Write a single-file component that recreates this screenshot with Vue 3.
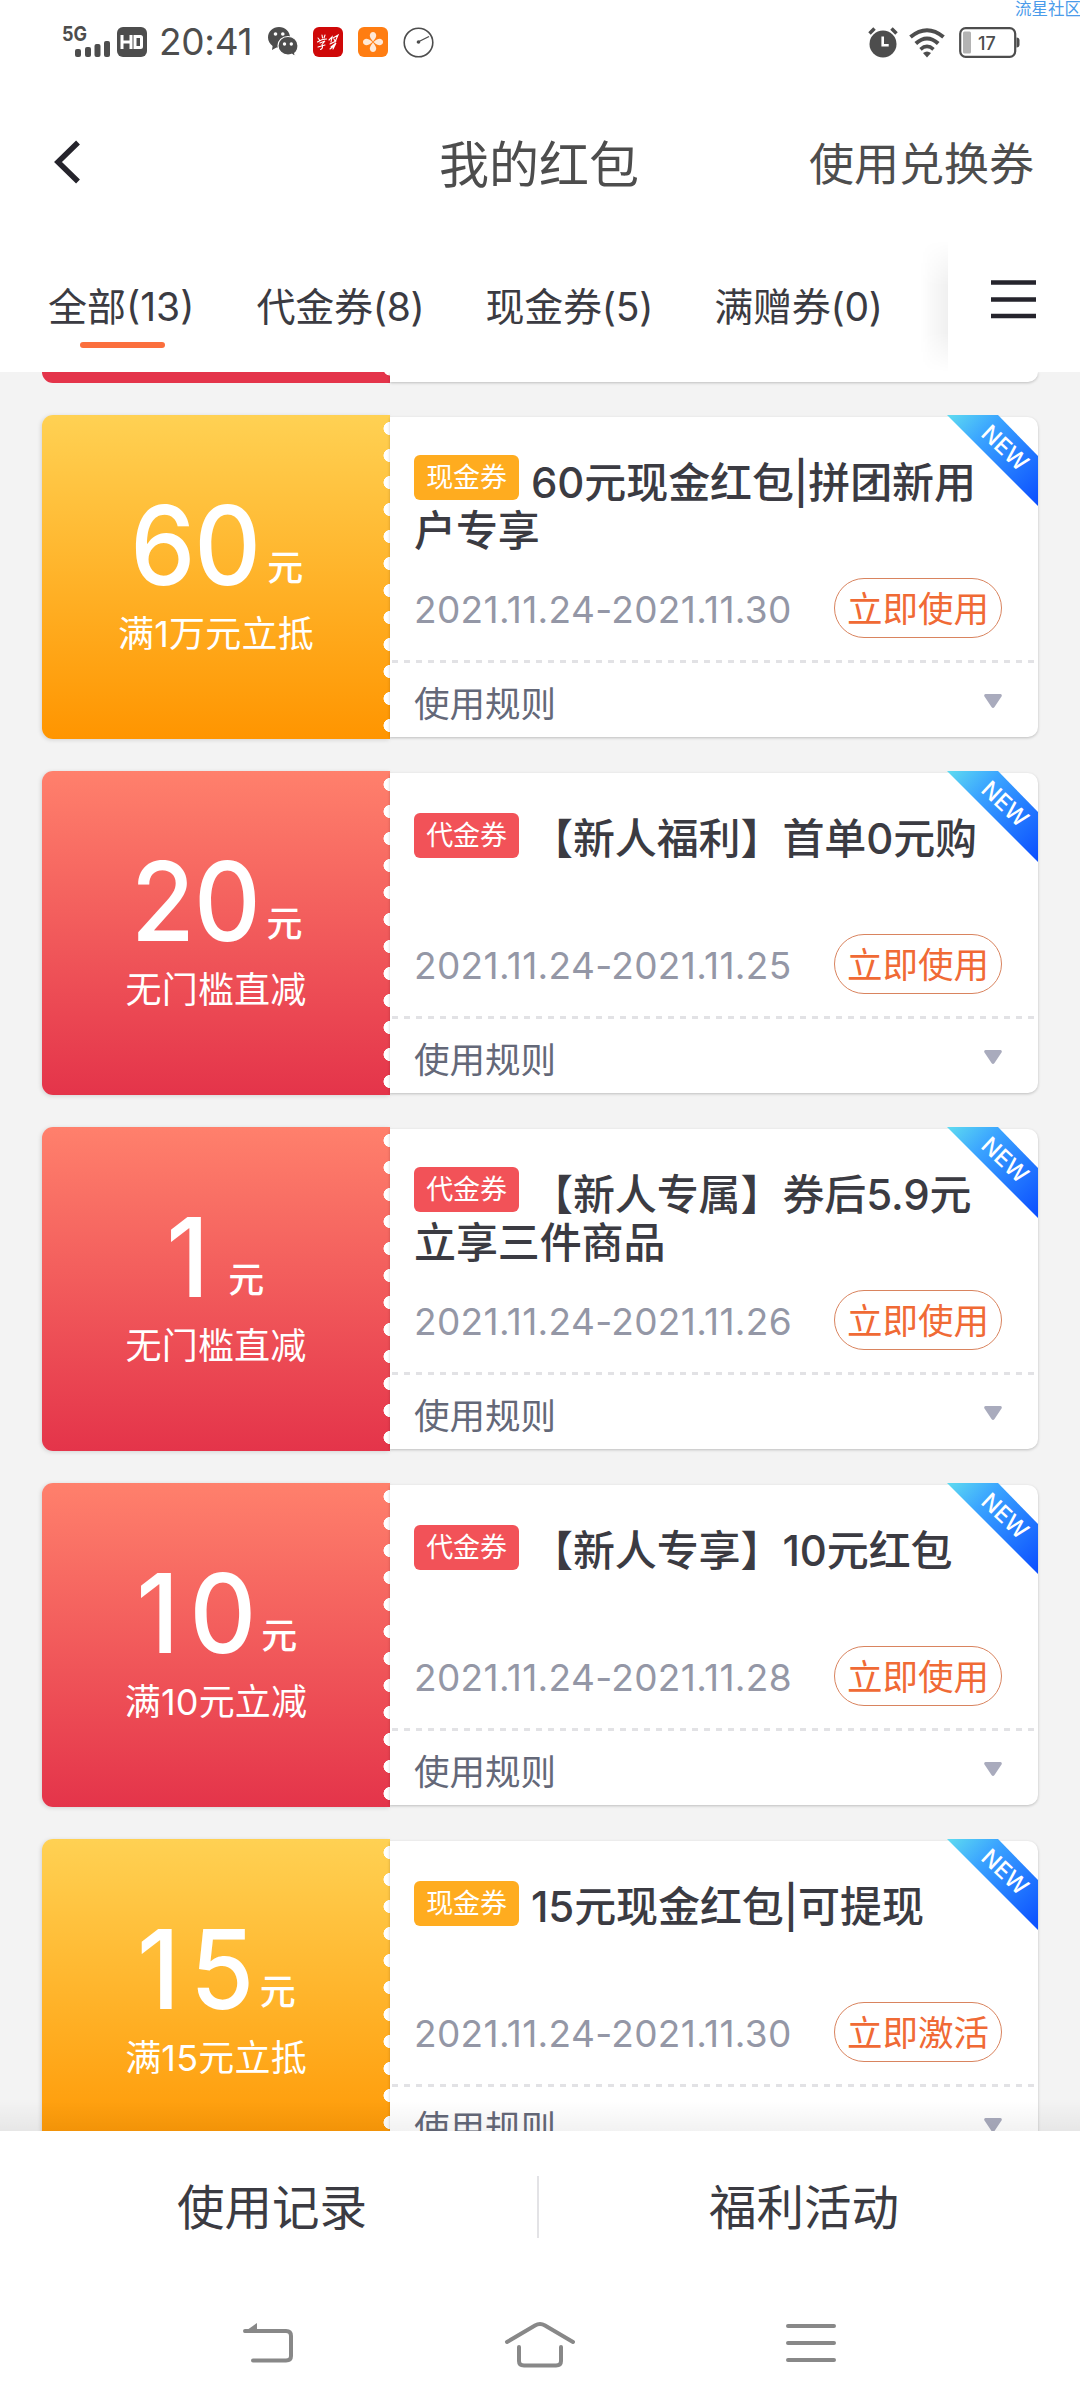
<script setup>
const tabs = ['全部(13)', '代金券(8)', '现金券(5)', '满赠券(0)']

const coupons = [
  { kind: 'cash', tag: '现金券', amount: '60', rule: '满1万元立抵', title: '60元现金红包|拼团新用户专享', date: '2021.11.24-2021.11.30', action: '立即使用', tall: true },
  { kind: 'voucher', tag: '代金券', amount: '20', rule: '无门槛直减', title: '【新人福利】首单0元购', date: '2021.11.24-2021.11.25', action: '立即使用' },
  { kind: 'voucher', tag: '代金券', amount: '1', rule: '无门槛直减', title: '【新人专属】券后5.9元立享三件商品', date: '2021.11.24-2021.11.26', action: '立即使用', tall: true },
  { kind: 'voucher', tag: '代金券', amount: '10', rule: '满10元立减', title: '【新人专享】10元红包', date: '2021.11.24-2021.11.28', action: '立即使用' },
  { kind: 'cash', tag: '现金券', amount: '15', rule: '满15元立抵', title: '15元现金红包|可提现', date: '2021.11.24-2021.11.30', action: '立即激活' }
]
</script>

<template>
  <div class="screen">
    <div class="status">
      <svg class="signal" width="52" height="36" viewBox="0 0 52 36">
        <text x="0" y="17" class="net" textLength="25" lengthAdjust="spacingAndGlyphs">5G</text>
        <rect x="13" y="25" width="6" height="8" rx="2" />
        <rect x="23" y="23" width="6" height="10" rx="2" />
        <rect x="32.500" y="20" width="6" height="13" rx="2" />
        <rect x="42" y="17" width="6" height="16" rx="2" />
      </svg>
      <svg class="hd" width="30" height="30" viewBox="0 0 30 30">
        <rect width="30" height="30" rx="6" fill="#4d4d4d" />
        <path d="M5 8v14M14 8v14M5 15h9M18 9.500h5.500q1 0 1 1v9q0 1-1 1H18z" fill="none" stroke="#fff" stroke-width="3" />
      </svg>
      <span class="clock">20:41</span>
      <svg class="wechat" width="30" height="30" viewBox="0 0 30 30">
        <path d="M11 0C4.900 0 0 4.600 0 10.500c0 3.500 1.900 6.500 4.600 8.400L4 23l4.500-2.600c6 1 13.500-3.500 13.500-9.900C22 4.600 17 0 11 0z" fill="#4d4d4d" />
        <path d="M20 9.500c-5.700 0-10 4-10 9.200s4.300 9.300 10 9.300c1.400 0 2.500-.2 3.800-.7L27.500 30l-.8-3.700c2-1.700 3.300-4.400 3.300-7.600 0-5.200-4.300-9.200-10-9.200z" fill="#4d4d4d" stroke="#fff" stroke-width="1.200" />
        <g fill="#fff"><circle cx="7.500" cy="7" r="1.800" /><circle cx="14.800" cy="7" r="1.800" /><circle cx="16.500" cy="17" r="1.700" /><circle cx="23.300" cy="17" r="1.700" /></g>
      </svg>
      <svg class="app" width="30" height="30" viewBox="0 0 30 30">
        <rect width="30" height="30" rx="6" fill="#cf0808" />
        <g fill="none" stroke="#fff" stroke-width="1.100" stroke-linecap="round">
          <path d="M5 11l1.500 2M9 8l.5 3M4.500 15q4-3 9-3M7 16l5-2-3 3.500q1.500 4-1.500 5M5 20l7-2M12 8l-1 3" />
          <path d="M16 13l3-3-1 5M20 11l5-3-3 7M17 17l6-3M18 20l5-4-3 6M17 22l4-3M21 12l1 2" />
        </g>
      </svg>
      <svg class="app" width="30" height="30" viewBox="0 0 30 30">
        <rect width="30" height="30" rx="6" fill="#ff7d12" />
        <g fill="#ffe9d8">
          <path d="M15 14.500q-3.500-4-3.200-6.500Q12.500 5 15 5t3.200 3q.3 2.500-3.200 6.500z" />
          <path d="M15 15.500q-3.500 4-3.200 6.500.7 3 3.200 3t3.200-3q.3-2.500-3.200-6.500z" />
          <path d="M14.500 15q-4-3.500-6.500-3.200-3 .7-3 3.200t3 3.200q2.500.3 6.500-3.200z" />
          <path d="M15.500 15q4-3.500 6.500-3.200 3 .7 3 3.200t-3 3.200q-2.500.3-6.500-3.200z" />
        </g>
      </svg>
      <svg class="app" width="31" height="31" viewBox="0 0 31 31">
        <circle cx="15.500" cy="15.500" r="14.300" fill="none" stroke="#4d4d4d" stroke-width="1.600" />
        <path d="M14 15.500L26 9.500" stroke="#4d4d4d" stroke-width="1.300" /><circle cx="15.500" cy="15" r="1.800" fill="#4d4d4d" />
      </svg>
      <div class="status-right">
        <svg width="30" height="31" viewBox="0 0 30 31">
          <circle cx="15" cy="17" r="13.500" fill="#4d4d4d" />
          <path d="M1.500 6.500l5-5M28.500 6.500l-5-5" stroke="#4d4d4d" stroke-width="3.500" />
          <path d="M14.700 9.500v8.800h6" fill="none" stroke="#fff" stroke-width="2.600" />
        </svg>
        <svg class="wifi" width="36" height="30" viewBox="0 0 36 30">
          <g fill="none" stroke="#4d4d4d" stroke-width="4">
            <path d="M1.500 9Q18-4.500 34.500 9" /><path d="M6.800 15.500Q18 5.500 29.200 15.500" /><path d="M11.500 21.300Q18 15.500 24.500 21.300" stroke-width="3.600" />
          </g>
          <path d="M14 25q4-3 8 0l-4 4.500z" fill="#4d4d4d" />
        </svg>
        <svg width="61" height="31" viewBox="0 0 61 31">
          <rect x="1.200" y="1.200" width="55" height="28.600" rx="5.500" fill="#fff" stroke="#4d4d4d" stroke-width="2.200" />
          <rect x="4" y="4.500" width="8" height="22" rx="1.500" fill="#b3b3b3" />
          <path d="M57.500 10.500q3 0 3 3v4q0 3-3 3z" fill="#4d4d4d" />
          <text x="19" y="22.500" class="pct">17</text>
        </svg>
      </div>
      <span class="mark">流星社区</span>
    </div>

    <header class="head">
      <svg width="26" height="44" viewBox="0 0 26 44"><path d="M24 2.500L4 22l20 19.500" fill="none" stroke="#25242c" stroke-width="5.500" /></svg>
      <h1>我的红包</h1>
      <a class="redeem">使用兑换券</a>
    </header>

    <nav class="tabs">
      <div class="tab-list">
        <span v-for="(t, i) in tabs" :key="t" class="tab" :class="{ active: i === 0 }">{{ t }}</span>
      </div>
      <div class="more">
        <svg width="45" height="39" viewBox="0 0 45 39"><path d="M0 2.500h45M0 19.500h45M0 36h45" stroke="#25242c" stroke-width="4.600" /></svg>
      </div>
    </nav>

    <main class="list">
      <div class="stub"><div class="stub-left"></div><div class="stub-right"></div></div>
      <article v-for="c in coupons" :key="c.title" class="coupon" :class="c.kind">
        <div class="value">
          <div class="amount" :class="{ teen: c.amount.length > 1 && c.amount[0] === '1', single: c.amount.length === 1 }"><b>{{ c.amount }}</b><small>元</small></div>
          <div class="cond">{{ c.rule }}</div>
        </div>
        <div class="info">
          <h2 :class="{ tall: c.tall }"><span class="tag">{{ c.tag }}</span>{{ c.title }}</h2>
          <div class="row">
            <time>{{ c.date }}</time>
            <button>{{ c.action }}</button>
          </div>
          <div class="rules">
            <span>使用规则</span>
            <svg width="18" height="14" viewBox="0 0 18 14"><path d="M1.500 0h15q2 .5 1 2.500L10.500 13q-1.500 1.800-3 0L.5 2.500Q-.5.500 1.500 0z" fill="#a9abbd" /></svg>
          </div>
        </div>
        <div class="ribbon"><span>NEW</span></div>
      </article>
    </main>

    <footer class="actions"><a>使用记录</a><i></i><a>福利活动</a></footer>
    <div class="sysnav">
      <svg width="54" height="44" viewBox="0 0 54 44"><path d="M4 10h41q5 0 5 5v20q0 4.500-5 4.500H12" /><path d="M2.500 11.500L16 2v9z" fill="#888" stroke="none" /></svg>
      <svg width="72" height="48" viewBox="0 0 72 48"><path d="M3 21L31 4.500q5-3 10 0L69 21M15 26v14q0 4.500 5 4.500h32q5 0 5-4.500V26" /></svg>
      <svg width="52" height="44" viewBox="0 0 52 44"><path d="M3 5h46M3 22h46M3 39h46" /></svg>
    </div>
  </div>
</template>

<style>
body { background: #fff; }
</style>

<style scoped>
.screen { width: 1080px; height: 2408px; display: flex; flex-direction: column; background: #fff; overflow: hidden; font-family: Inter, "Noto Sans CJK SC", sans-serif; color: #3b3b42; }
.status { position: relative; height: 84px; display: flex; align-items: center; padding-left: 62px; box-sizing: border-box; flex: none; }
.signal { margin-right: 3px; margin-top: -1px; fill: #4d4d4d; overflow: visible; }
.net { font: 700 20px Inter, sans-serif; }
.clock { font: 400 37px/40px Inter, sans-serif; color: #4d4d4d; margin-left: 12px; width: 109px; letter-spacing: -0.3px; }
.app { margin-left: 15px; }
.status-right { position: absolute; left: 868px; top: 27px; display: flex; }
.wifi { margin: 1px 14px 0 11px; }
.pct { font: 500 18px Inter, sans-serif; fill: #4d4d4d; }
.mark { position: absolute; right: -1px; top: -1px; font-size: 16.500px; line-height: 20px; color: #4a9bea; white-space: nowrap; }
.head { height: 156px; flex: none; display: flex; align-items: center; justify-content: space-between; padding: 0 46px 0 54px; position: relative; box-sizing: border-box; }
.head h1 { position: absolute; left: 0; right: 0; margin: 5px 2px 0 0; text-align: center; font-size: 50px; line-height: 60px; font-weight: 400; color: #4d4d4d; }
.redeem { font-size: 45px; line-height: 60px; color: #4d4d4d; margin-top: 5px; }
.tabs { height: 132px; flex: none; display: flex; }
.tab-list { position: relative; width: 948px; box-sizing: border-box; padding-left: 48px; display: flex; }
.tab-list::after { content: ""; position: absolute; right: 0; top: 0; bottom: 0; width: 28px; background: linear-gradient(to left, rgba(0,0,0,.06), rgba(0,0,0,0)); mask-image: linear-gradient(transparent, #000 35%, #000 70%, transparent); }
.tab { position: relative; font-size: 39px; line-height: 60px; margin-top: 37px; height: 71px; white-space: nowrap; margin-right: 61px; letter-spacing: -0.25px; }
.tab.active { margin-right: 62px; letter-spacing: 0; }
.tab.active::after { content: ""; position: absolute; left: 32px; bottom: 0; width: 85px; height: 6px; border-radius: 3px; background: #fb6f3d; }
.more { width: 132px; padding: 40px 0 0 43px; box-sizing: border-box; }
.list { height: 1759px; flex: none; overflow: hidden; background: #f3f3f3; padding: 0 42px; position: relative; box-sizing: border-box; }
.list::after { content: ""; position: absolute; left: 0; right: 0; bottom: 0; height: 30px; background: linear-gradient(to top, rgba(0,0,0,.05), rgba(0,0,0,0)); }
.stub { display: flex; height: 11px; margin-bottom: 32px; }
.stub-left { width: 348px; border-radius: 0 0 0 11px; background: radial-gradient(circle at 348px -3px, #fff 6.200px, transparent 6.800px), #e4344a; }
.stub-right { flex: 1; height: 9.500px; background: #fff; border-radius: 0 0 10px 0; box-shadow: 0 1px 3px rgba(0,0,0,.22); }
.coupon { position: relative; height: 324px; display: flex; margin-bottom: 32px; }
.value { width: 348px; box-sizing: border-box; padding-top: 85px; border-radius: 11px 0 0 11px; color: #fff; text-align: center; box-shadow: -1px 1px 4px rgba(0,0,0,.13); }
.cash .value { background: radial-gradient(circle at 7px 13.500px, #fff 6.200px, transparent 6.800px) right top / 7px 27px repeat-y, linear-gradient(#ffd153, #ff9500); }
.voucher .value { background: radial-gradient(circle at 7px 13.500px, #fff 6.200px, transparent 6.800px) right top / 7px 27px repeat-y, linear-gradient(#ff806c, #e4344a); }
.amount { height: 90px; padding-right: 3px; display: flex; justify-content: center; align-items: baseline; line-height: 90px; }
.amount b { font-size: 110px; font-weight: 500; letter-spacing: -1px; transform: scaleX(.94); }
.amount small { position: relative; top: -4px; font-size: 36px; font-weight: 500; margin-left: 3px; }
.amount.teen b { letter-spacing: 11px; }
.amount.teen small { margin-left: -9px; }
.amount.single b { letter-spacing: 0; }
.amount.single small { margin-left: 18px; }
.cond { font-size: 36px; line-height: 50px; margin-top: 19px; letter-spacing: 0.2px; }
.info { flex: 1; min-width: 0; margin: 2px 0; background: #fff; border-radius: 0 10px 10px 0; box-shadow: 0 1px 3px rgba(0,0,0,.22); padding-top: 42px; box-sizing: border-box; }
h2 { margin: 0; height: 96px; width: 566px; padding-left: 24px; font-size: 42px; line-height: 48px; font-weight: 500; letter-spacing: -0.1px; }
.tag { display: inline-block; width: 105px; height: 45px; margin-right: 12px; border-radius: 6px; text-align: center; color: #fff; font-size: 27px; line-height: 45px; font-weight: 400; vertical-align: top; position: relative; top: -2px; }
.tall .tag { top: -4px; }
.cash .tag { background: #ffac1f; }
.voucher .tag { background: #f25258; }
.row { display: flex; justify-content: space-between; align-items: center; margin-top: 23px; padding: 0 36px 0 24px; height: 60px; }
time { font-size: 37px; color: #9497a6; letter-spacing: 0.35px; padding-top: 3px; }
button { width: 168px; height: 60px; padding: 3px 0 0; border: 1.500px solid #d9845f; border-radius: 30px; background: #fff; color: #f06a35; font: 400 35.500px/56px Inter, "Noto Sans CJK SC", sans-serif; white-space: nowrap; }
.rules { margin-top: 22px; height: 77px; box-sizing: border-box; padding: 6px 36px 0 24px; display: flex; align-items: center; justify-content: space-between; font-size: 35.500px; color: #646878; background: repeating-linear-gradient(to right, #e2e2e5 0 6px, transparent 6px 12px) 2px 0 / 644px 3px no-repeat; }
.rules svg { margin-top: -1px; }
.ribbon { position: absolute; right: 0; top: 0; width: 91px; height: 91px; background: linear-gradient(135deg, #5fdcf0 0%, #3ba5ff 30%, #0a4dff 100%); clip-path: polygon(0 0, 51px 0, 100% 41px, 100% 100%); }
.ribbon span { position: absolute; left: 28px; top: 18px; width: 60px; height: 30px; text-align: center; transform: rotate(43deg); color: #fff; font: 500 23px/30px Inter, sans-serif; }
.actions { height: 152px; flex: none; display: flex; align-items: center; background: #fff; padding: 0 11px 0 7px; font-size: 47.500px; box-sizing: border-box; }
.actions a { flex: 1; text-align: center; margin-top: -5px; }
.actions i { width: 2px; height: 62px; background: #e3e3e6; }
.sysnav { flex: 1; display: flex; align-items: flex-start; padding: 38px 243px 0 241px; justify-content: space-between; }
.sysnav svg { fill: none; stroke: #888; stroke-width: 4; stroke-linecap: round; stroke-linejoin: round; }
</style>
